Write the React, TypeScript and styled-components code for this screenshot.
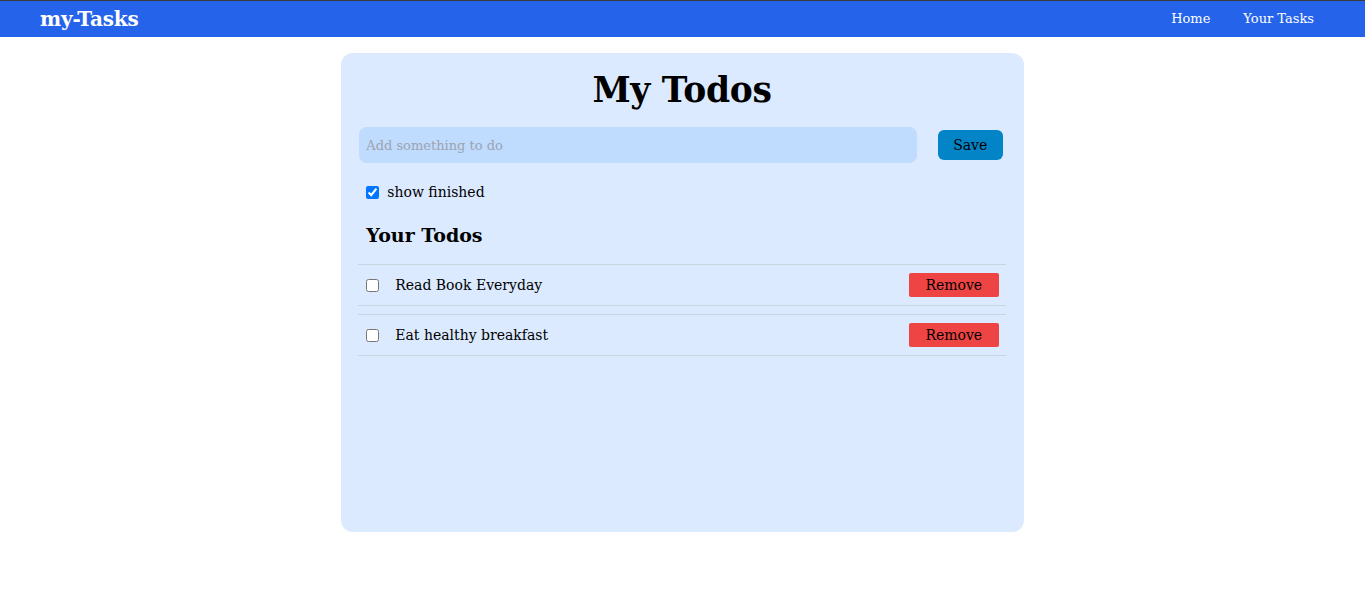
import styled, { createGlobalStyle } from 'styled-components';

const GlobalStyle = createGlobalStyle`
  *, *::before, *::after {
    box-sizing: border-box;
  }
  body {
    margin: 0;
    border-top: 1px solid #3a3a3a;
    background: #ffffff;
    font-family: 'DejaVu Serif', Georgia, serif;
    color: #000000;
  }
`;

const Navbar = styled.nav`
  display: flex;
  justify-content: space-between;
  align-items: center;
  height: 36px;
  padding: 0 51px 0 40px;
  background: #2563eb;
  color: #ffffff;
`;

const Brand = styled.span`
  font-weight: 700;
  font-size: 20px;
  line-height: 36px;
  letter-spacing: -0.2px;
`;

const NavLinks = styled.ul`
  display: flex;
  gap: 33px;
  margin: 0;
  padding: 0;
  list-style: none;
`;

const NavLink = styled.li`
  font-size: 13px;
  line-height: 38px;
  cursor: pointer;
`;

const Card = styled.main`
  width: 50%;
  min-height: 80vh;
  margin: 16px auto;
  padding: 17px 18px 20px 17px;
  border-radius: 12px;
  background: #dbeafe;
`;

const Title = styled.h1`
  margin: 0;
  font-size: 34.5px;
  line-height: 40px;
  font-weight: 700;
  text-align: center;
  letter-spacing: -0.3px;
`;

const AddRow = styled.div`
  display: flex;
  align-items: center;
  gap: 21px;
  margin-top: 17px;
  padding: 0 3px 0 1px;
`;

const TodoInput = styled.input`
  flex: 1;
  height: 36px;
  padding: 0 7px;
  border: none;
  border-radius: 8px;
  background: #bfdbfe;
  font-family: inherit;
  font-size: 13px;
  outline: none;
  &::placeholder {
    color: #9ca3af;
  }
`;

interface ButtonProps {
  $variant: 'save' | 'remove';
}

const ActionButton = styled.button<ButtonProps>`
  width: ${(p) => (p.$variant === 'save' ? '65px' : '90px')};
  height: ${(p) => (p.$variant === 'save' ? '30px' : '24px')};
  padding: 0;
  border: none;
  border-radius: ${(p) => (p.$variant === 'save' ? '6px' : '2px')};
  background: ${(p) => (p.$variant === 'save' ? '#0284c7' : '#ef4444')};
  color: #000000;
  font-family: inherit;
  font-size: 14px;
  line-height: 24px;
  cursor: pointer;
`;

const FilterLabel = styled.label`
  display: flex;
  align-items: center;
  gap: 8px;
  margin-top: 17px;
  padding-left: 8px;
  font-size: 14px;
  line-height: 24px;
`;

const Check = styled.input`
  width: 13px;
  height: 13px;
  margin: 0;
`;

const SectionTitle = styled.h2`
  margin: 17px 0 0;
  padding-left: 8px;
  font-size: 19px;
  line-height: 28px;
  font-weight: 700;
`;

const TodoList = styled.div`
  display: flex;
  flex-direction: column;
  gap: 8px;
  margin-top: 15px;
`;

const TodoRow = styled.div`
  display: flex;
  align-items: center;
  justify-content: space-between;
  height: 42px;
  padding: 0 7px 0 8px;
  border-top: 1px solid #cbd5e1;
  border-bottom: 1px solid #cbd5e1;
`;

const TodoLeft = styled.div`
  display: flex;
  align-items: center;
  gap: 16px;
  font-size: 14px;
  line-height: 24px;
`;

const todos = [
  { id: 1, text: 'Read Book Everyday' },
  { id: 2, text: 'Eat healthy breakfast' },
];

export default function App() {
  return (
    <>
      <GlobalStyle />
      <Navbar>
        <Brand>my-Tasks</Brand>
        <NavLinks>
          <NavLink>Home</NavLink>
          <NavLink>Your Tasks</NavLink>
        </NavLinks>
      </Navbar>
      <Card>
        <Title>My Todos</Title>
        <AddRow>
          <TodoInput placeholder="Add something to do" />
          <ActionButton $variant="save">Save</ActionButton>
        </AddRow>
        <FilterLabel>
          <Check type="checkbox" defaultChecked />
          show finished
        </FilterLabel>
        <SectionTitle>Your Todos</SectionTitle>
        <TodoList>
          {todos.map((todo) => (
            <TodoRow key={todo.id}>
              <TodoLeft>
                <Check type="checkbox" />
                <span>{todo.text}</span>
              </TodoLeft>
              <ActionButton $variant="remove">Remove</ActionButton>
            </TodoRow>
          ))}
        </TodoList>
      </Card>
    </>
  );
}
